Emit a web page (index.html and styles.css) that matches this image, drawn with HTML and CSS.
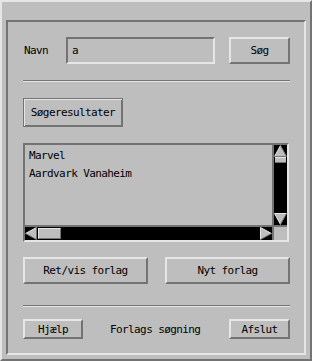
FILE: index.html
```html
<!DOCTYPE html>
<html lang="da">
<head>
    <meta charset="UTF-8">
    <title>Forlags søgning</title>
    <link rel="stylesheet" href="styles.css">
</head>
<body>
    <div class="window">
        <div class="frame">
            <div class="search-row">
                <span class="label">Navn</span>
                <div class="entry">a</div>
                <button class="btn btn-search">Søg</button>
            </div>

            <div class="sep"></div>

            <button class="btn btn-results">Søgeresultater</button>

            <div class="scrolled">
                <div class="list">
                    <div class="item">Marvel</div>
                    <div class="item">Aardvark Vanaheim</div>
                </div>
                <div class="vscroll">
                    <svg class="arrow" width="13" height="12" viewBox="0 0 13 12">
                        <polygon points="6.5,0.5 0.5,11.5 12.5,11.5" fill="#bebebe"/>
                        <polyline points="0.5,11.5 6.5,0.5" stroke="#e6e6e6" fill="none"/>
                        <polyline points="6.5,0.5 12.5,11.5 0.5,11.5" stroke="#737373" fill="none"/>
                    </svg>
                    <div class="vthumb"></div>
                    <div class="spacer"></div>
                    <svg class="arrow" width="13" height="12" viewBox="0 0 13 12">
                        <polygon points="0.5,0.5 12.5,0.5 6.5,11.5" fill="#bebebe"/>
                        <polyline points="6.5,11.5 0.5,0.5 12.5,0.5" stroke="#e6e6e6" fill="none"/>
                        <polyline points="12.5,0.5 6.5,11.5" stroke="#737373" fill="none"/>
                    </svg>
                </div>
                <div class="hscroll">
                    <svg class="arrow" width="12" height="13" viewBox="0 0 12 13">
                        <polygon points="0.5,6.5 11.5,0.5 11.5,12.5" fill="#bebebe"/>
                        <polyline points="0.5,6.5 11.5,0.5" stroke="#e6e6e6" fill="none"/>
                        <polyline points="11.5,0.5 11.5,12.5 0.5,6.5" stroke="#737373" fill="none"/>
                    </svg>
                    <div class="hthumb"></div>
                    <div class="spacer"></div>
                    <svg class="arrow" width="12" height="13" viewBox="0 0 12 13">
                        <polygon points="0.5,0.5 11.5,6.5 0.5,12.5" fill="#bebebe"/>
                        <polyline points="0.5,12.5 0.5,0.5 11.5,6.5" stroke="#e6e6e6" fill="none"/>
                        <polyline points="11.5,6.5 0.5,12.5" stroke="#737373" fill="none"/>
                    </svg>
                </div>
                <div class="corner"></div>
            </div>

            <div class="action-row">
                <button class="btn btn-wide">Ret/vis forlag</button>
                <button class="btn btn-wide">Nyt forlag</button>
            </div>

            <div class="sep sep-bottom"></div>

            <div class="footer-row">
                <button class="btn btn-help">Hjælp</button>
                <span class="title">Forlags søgning</span>
                <button class="btn btn-quit">Afslut</button>
            </div>
        </div>
    </div>
</body>
</html>
```

FILE: styles.css
```css
* {
    box-sizing: border-box;
}
body {
    margin: 0;
    background-color: #bebebe;
    font-family: "DejaVu Sans Mono", "Liberation Mono", monospace;
    font-size: 11px;
    letter-spacing: -0.6px;
    color: #000;
}
.window {
    width: 312px;
    height: 361px;
    border: 2px solid;
    border-color: #e6e6e6 #737373 #737373 #e6e6e6;
    padding: 18px 4px 4px 4px;
    background-color: #bebebe;
}
.frame {
    width: 300px;
    height: 335px;
    border: 2px solid;
    border-color: #737373 #e6e6e6 #e6e6e6 #737373;
    padding: 15px 14px 0 15px;
}
.search-row {
    display: flex;
    align-items: center;
    height: 27px;
}
.label {
    width: 43px;
    padding-left: 1px;
}
.entry {
    width: 149px;
    height: 27px;
    margin-right: 14px;
    padding-left: 4px;
    line-height: 23px;
    border: 2px solid;
    border-color: #737373 #e6e6e6 #e6e6e6 #737373;
}
.btn {
    display: block;
    margin: 0;
    padding: 0;
    background-color: #bebebe;
    font: inherit;
    letter-spacing: inherit;
    color: #000;
    border: 2px solid;
    border-color: #e6e6e6 #737373 #737373 #e6e6e6;
}
.btn-search {
    width: 61px;
    height: 27px;
}
.sep {
    height: 2px;
    margin-top: 16px;
    border-top: 1px solid #737373;
    border-bottom: 1px solid #e6e6e6;
}
.btn-results {
    width: 100px;
    height: 29px;
    margin-top: 16px;
    border: 1px solid #737373;
    box-shadow: inset 1px 1px 0 #e6e6e6, inset -1px -1px 0 #737373;
}
.scrolled {
    display: grid;
    grid-template-columns: 1fr 15px;
    grid-template-rows: 1fr 15px;
    width: 266px;
    height: 99px;
    margin-top: 16px;
    border: 2px solid;
    border-color: #737373 #e6e6e6 #e6e6e6 #737373;
}
.list {
    padding: 2px 0 0 4px;
    line-height: 18px;
}
.vscroll {
    display: flex;
    flex-direction: column;
    align-items: center;
    background-color: #000;
    border-left: 2px solid #737373;
}
.vthumb {
    width: 11px;
    height: 6px;
    background-color: #bebebe;
    border-top: 1px solid #e6e6e6;
    border-bottom: 1px solid #737373;
}
.hscroll {
    display: flex;
    align-items: center;
    background-color: #000;
    border-top: 2px solid #737373;
}
.hthumb {
    width: 23px;
    height: 11px;
    margin-left: 1px;
    background-color: #bebebe;
    border: 1px solid;
    border-color: #e6e6e6 #737373 #737373 #e6e6e6;
}
.spacer {
    flex: 1;
}
.arrow {
    display: block;
    flex: none;
}
.corner {
    background-color: #bebebe;
    border-top: 2px solid #737373;
    border-left: 2px solid #737373;
}
.action-row {
    display: flex;
    justify-content: space-between;
    width: 267px;
    margin-top: 15px;
}
.btn-wide {
    width: 125px;
    height: 27px;
}
.sep-bottom {
    margin-top: 21px;
}
.footer-row {
    display: flex;
    align-items: center;
    width: 267px;
    margin-top: 12px;
}
.btn-help {
    width: 60px;
    height: 20px;
}
.title {
    margin-left: 27px;
}
.btn-quit {
    width: 61px;
    height: 20px;
    margin-left: auto;
}
```
